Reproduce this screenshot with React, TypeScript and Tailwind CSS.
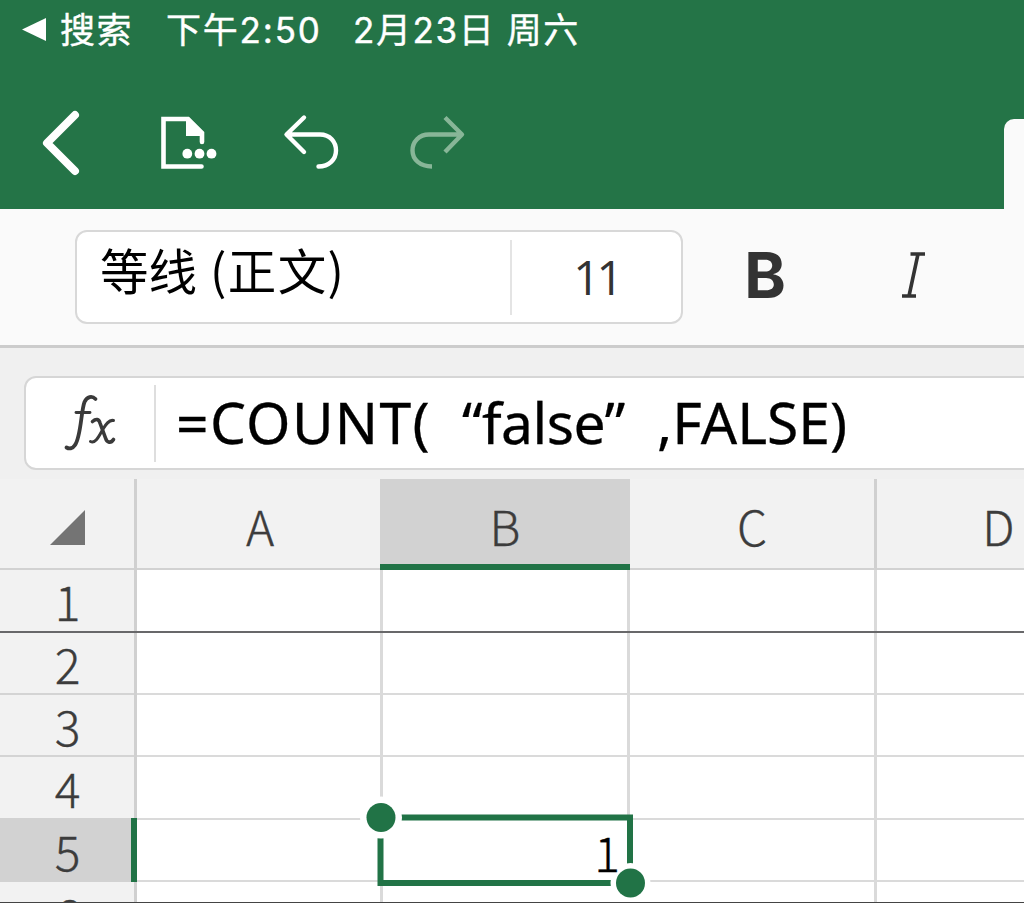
import React from "react";

const ROWS = [
  { n: "1", cls: "h-[63px] border-b-2 border-[#68686a]", head: "h-[63px] -mr-[3px] pr-[2px] border-b-2 border-[#68686a] bg-[#f2f2f2] leading-[60px] [clip-path:polygon(0_0,calc(100%-3px)_0,calc(100%-3px)_61px,100%_61px,100%_100%,0_100%)]" },
  { n: "2", cls: "h-[62px] border-b-2 border-[#dadada]", head: "h-[62px] border-b-2 border-[#d4d4d4] bg-[#f2f2f2] pl-px leading-[60px]" },
  { n: "3", cls: "h-[62px] border-b-2 border-[#dadada]", head: "h-[62px] border-b-2 border-[#d4d4d4] bg-[#f2f2f2] pl-px leading-[60px]" },
  { n: "4", cls: "h-[63px] border-b-2 border-[#dadada]", head: "h-[61px] bg-[#f2f2f2] pl-px leading-[61px]" },
  { n: "5", cls: "h-[62px] border-b-2 border-[#dadada]", head: "h-[64px] bg-[#d2d2d2] pl-px leading-[64px]" },
];

function StatusBar() {
  return (
    <div className="flex h-[60px] items-center whitespace-pre pl-[21px] font-['Inter','Noto_Sans_CJK_SC',sans-serif] text-[35px] leading-[60px] font-normal text-white [-webkit-text-stroke:0.4px_white]">
      <svg width="26" height="26" viewBox="0 0 26 26" className="shrink-0">
        <path d="M1 12.5 25 1V24Z" fill="currentColor" />
      </svg>
      <span className="ml-[13px] w-[106px] shrink-0 tracking-[1.6px]">搜索</span>
      <span className="w-[187px] shrink-0 tracking-[1.8px]">下午2:50</span>
      <span className="tracking-[1.6px]">2月23日 周六</span>
    </div>
  );
}

function Toolbar() {
  return (
    <div className="flex h-[149px] items-start justify-between">
      <div className="flex items-start pt-[47px] text-white">
        <svg width="54" height="72" viewBox="36 107 54 72" className="ml-9" fill="none" stroke="currentColor">
          <path d="M75 115 47 143 75 171" strokeWidth="8" strokeLinecap="round" strokeLinejoin="round" />
        </svg>
        <svg width="66" height="72" viewBox="156 107 66 72" className="ml-[66px]" fill="none" stroke="currentColor">
          <path d="M202 142V133L188 119H163.500V166.500H201.500" strokeWidth="4.6" strokeLinecap="round" />
          <path d="M186 117.500H189L204 132.500V136H186Z" fill="currentColor" stroke="none" />
          <circle cx="187.300" cy="153.700" r="4.900" fill="currentColor" stroke="none" />
          <circle cx="199.500" cy="153.700" r="4.900" fill="currentColor" stroke="none" />
          <circle cx="211.500" cy="153.700" r="4.900" fill="currentColor" stroke="none" />
        </svg>
        <svg width="66" height="72" viewBox="278 107 66 72" className="ml-[56px]" fill="none" stroke="currentColor">
          <path d="M304 117.500 286.500 134.500 304 152M287 134.500H320C330 134.500 336 142 336 150.500C336 159.500 329 166.500 318.500 166.500" strokeWidth="4.400" strokeLinecap="round" strokeLinejoin="round" />
        </svg>
        <svg width="66" height="72" viewBox="404 107 66 72" className="ml-[60px] text-[#88b698]" fill="none" stroke="currentColor">
          <path d="M445 117.500 462 134.500 445 152M462 134.500H429C419 134.500 412.500 142 412.500 150.500C412.500 159.500 420 166.500 432 166.500" strokeWidth="4.400" strokeLinejoin="round" />
        </svg>
      </div>
      <div className="mt-[59px] h-[90px] w-5 rounded-tl-[10px] bg-[#fafafa]" />
    </div>
  );
}

function FormatBar() {
  return (
    <div className="flex h-[139px] items-start border-b-[3px] border-[#cccccc] bg-[#fafafa] pl-[75px] pt-[21px]">
      <div className="flex h-[94px] w-[608px] shrink-0 items-center rounded-[12px] border-2 border-[#d8d8d8] bg-white">
        <div className="flex h-full w-[433px] whitespace-pre pl-[23px] font-['Noto_Sans_CJK_SC',sans-serif] text-[48.500px] leading-[74px] text-black">
          <span className="w-[110px]">等线</span>
          <span className="tracking-[1.4px]">(正文)</span>
        </div>
        <div className="h-[75px] w-0.5 bg-[#e4e4e4]" />
        <div className="flex-1 text-center font-['Open_Sans',sans-serif] text-[47px] leading-[87px] tracking-[-3.500px] text-[#333]">11</div>
      </div>
      <div className="ml-[59px] w-[46px] shrink-0 text-center font-['Inter',sans-serif] text-[63px] leading-[90px] font-bold text-[#333]">B</div>
      <svg width="28" height="50" viewBox="0 0 28 50" className="ml-[110px] mt-[20px] shrink-0" fill="none" stroke="#333">
        <path d="M12.500 4H27M4 46H18M20 4 11 46" strokeWidth="3.600" />
      </svg>
    </div>
  );
}

function FormulaBar() {
  return (
    <div className="h-[131px] overflow-hidden bg-[#f0f0f0] pl-6 pt-7">
      <div className="flex h-[94px] w-[1020px] items-center rounded-[12px] border-2 border-[#d6d6d6] bg-white">
        <div className="flex w-[128px] shrink-0 justify-center">
          <svg width="54" height="58" viewBox="62 394 54 58" fill="none" stroke="#3a3a3a" strokeLinecap="round">
            <path d="M94.500 399C91 395.500 86 396.500 83.500 402C80 411 80 437 74 445C71.500 449 68 449 65.500 447.500" strokeWidth="3.800" />
            <path d="M75 412.500H89" strokeWidth="2.800" />
            <path d="M91.500 421.500C95 418.500 98 419 99 423L104.500 438C106 443 110 443.500 112.500 439.500" strokeWidth="3.600" />
            <path d="M112.500 420.500C108 419.500 105 424 102 429C98 436 94.500 444 89.500 441.500" strokeWidth="3" />
          </svg>
        </div>
        <div className="h-[77px] w-0.5 shrink-0 bg-[#dedede]" />
        <div className="flex whitespace-pre pl-[20px] font-['Noto_Sans',sans-serif] text-[57px] leading-[90px] text-black [-webkit-text-stroke:0.3px_black]">
          <span className="-mt-[2px] w-[286px] shrink-0 tracking-[1.300px]">=COUNT(</span>
          <span className="-mt-[2px] w-[195px] shrink-0 tracking-[-0.500px]">“false”</span>
          <span className="-mt-[2px] tracking-[0px]">,FALSE)</span>
        </div>
      </div>
    </div>
  );
}

function Sheet() {
  return (
    <div className="relative flex h-[424px] overflow-hidden border-b border-[#444] font-['Noto_Sans_CJK_SC',sans-serif] text-[48px] font-light text-[#3c3c3c] [-webkit-text-stroke:0.35px_currentColor]">
      <div className="flex w-[137px] shrink-0 flex-col border-r-[3px] border-[#d0d0d0]">
        <div className="flex h-[91px] shrink-0 justify-end border-b-2 border-[#d2d2d2] bg-[#f2f2f2] pr-[49px] pt-[31px]">
          <svg width="35" height="35" viewBox="0 0 35 35"><path d="M35 0V35H0Z" fill="#747474" /></svg>
        </div>
        {ROWS.map((r) => (
          <div key={r.n} className={"relative shrink-0 text-center " + r.head}>
            {r.n}
            {r.n === "5" && <span className="absolute top-0 -right-[3px] h-full w-[6px] bg-[#217346]" />}
          </div>
        ))}
        <div className="h-[21px] shrink-0 bg-[#f2f2f2] pl-px text-center leading-[64px]">6</div>
      </div>
      {["A", "B", "C", "D"].map((c) => (
        <div key={c} className={(c === "A" ? "w-[246px]" : "w-[247px]") + " flex shrink-0 flex-col"}>
          <div className={"h-[91px] shrink-0 text-center leading-[92px] " + (c === "B" ? "-ml-[3px] border-b-[6px] border-[#217346] bg-[#d2d2d2]" : "border-b-2 border-[#d2d2d2] bg-[#f2f2f2]" + (c === "C" ? " border-r-[3px] border-r-[#d0d0d0]" : "") + (c === "D" ? " pr-1" : ""))}>
            {c}
          </div>
          <div className="shrink-0 border-r-[3px] border-[#dadada] bg-white">
            {ROWS.map((r) => (
              <div key={r.n} className={"bg-white pr-[7px] text-right leading-[62px] text-black " + r.cls + (r.n === "1" ? " -mr-[3px] [clip-path:polygon(0_0,calc(100%-3px)_0,calc(100%-3px)_61px,100%_61px,100%_100%,0_100%)]" : "")}>
                {c === "B" && r.n === "5" ? <span className="relative z-10">1</span> : ""}
              </div>
            ))}
            <div className="h-[21px]" />
          </div>
        </div>
      ))}
      <svg width="310" height="110" viewBox="355 793 310 110" className="absolute left-[355px] top-[314px]">
        <path d="M380.500 817.500H630V883H380.500Z" fill="none" stroke="#217346" strokeWidth="6" />
        <circle cx="381" cy="817.500" r="21" fill="#fff" />
        <circle cx="630.500" cy="883" r="20" fill="#fff" />
        <circle cx="381" cy="817.500" r="14.500" fill="#217346" />
        <circle cx="630.500" cy="883" r="14.500" fill="#217346" />
      </svg>
    </div>
  );
}

export default function App() {
  return (
    <div className="flex h-[903px] w-[1024px] flex-col overflow-hidden bg-white">
      <header className="h-[209px] shrink-0 bg-[#247447]">
        <StatusBar />
        <Toolbar />
      </header>
      <FormatBar />
      <FormulaBar />
      <Sheet />
    </div>
  );
}
